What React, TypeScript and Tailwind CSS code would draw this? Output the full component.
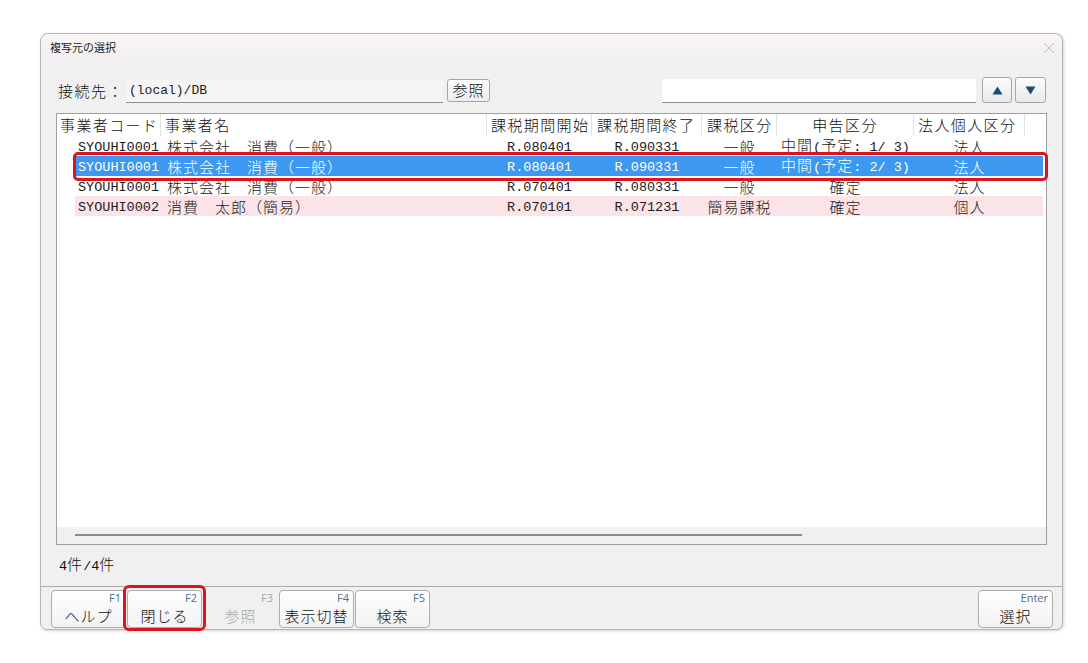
import React from "react";

type Run = { wide: boolean; t: string };

// Split a string into half-width and full-width runs so each gets its own font.
function splitRuns(s: string): Run[] {
  const runs: Run[] = [];
  for (const ch of s) {
    const wide = (ch.codePointAt(0) ?? 0) > 0x2000;
    const last = runs[runs.length - 1];
    if (last && last.wide === wide) last.t += ch;
    else runs.push({ wide, t: ch });
  }
  return runs;
}

function Txt({ s }: { s: string }) {
  return (
    <span className="whitespace-pre">
      {splitRuns(s).map((r, i) =>
        r.wide ? (
          <span key={i} className="font-['Noto_Sans_CJK_JP',sans-serif] font-light text-[15px] tracking-[1px]">
            {r.t}
          </span>
        ) : (
          <span key={i} className="font-['Liberation_Mono',monospace] text-[13.5px]">
            {r.t}
          </span>
        )
      )}
    </span>
  );
}

type Row = {
  code: string;
  name: string;
  start: string;
  end: string;
  kubun: string;
  shinkoku: string;
  houjin: string;
  tone: "plain" | "selected" | "pink";
};

const rows: Row[] = [
  {
    code: "SYOUHI0001",
    name: "株式会社　消費（一般）",
    start: "R.080401",
    end: "R.090331",
    kubun: "一般",
    shinkoku: "中間(予定: 1/ 3)",
    houjin: "法人",
    tone: "plain",
  },
  {
    code: "SYOUHI0001",
    name: "株式会社　消費（一般）",
    start: "R.080401",
    end: "R.090331",
    kubun: "一般",
    shinkoku: "中間(予定: 2/ 3)",
    houjin: "法人",
    tone: "selected",
  },
  {
    code: "SYOUHI0001",
    name: "株式会社　消費（一般）",
    start: "R.070401",
    end: "R.080331",
    kubun: "一般",
    shinkoku: "確定",
    houjin: "法人",
    tone: "plain",
  },
  {
    code: "SYOUHI0002",
    name: "消費　太郎（簡易）",
    start: "R.070101",
    end: "R.071231",
    kubun: "簡易課税",
    shinkoku: "確定",
    houjin: "個人",
    tone: "pink",
  },
];

function HeaderCell({ w, children, center }: { w: string; children: React.ReactNode; center?: boolean }) {
  return (
    <div
      className={
        w +
        " h-full flex items-center border-r border-[#e2e2e2] text-[15px] font-light tracking-[1.4px] whitespace-nowrap " +
        (center ? "justify-center" : "")
      }
    >
      {children}
    </div>
  );
}

function DataRow({ r }: { r: Row }) {
  const tone =
    r.tone === "selected"
      ? "bg-[#3c98f0] text-white"
      : r.tone === "pink"
      ? "bg-[#fae4e8] text-[#1a1a1a]"
      : "text-[#1a1a1a]";
  return (
    <div className={"relative ml-[18px] w-[968px] h-[20px] flex items-center leading-[20px] " + tone}>
      <div className="w-[86px] pl-[3px]">
        <Txt s={r.code} />
      </div>
      <div className="w-[326px] pl-[6px]">
        <Txt s={r.name} />
      </div>
      <div className="w-[105px] text-center">
        <Txt s={r.start} />
      </div>
      <div className="w-[110px] text-center">
        <Txt s={r.end} />
      </div>
      <div className="w-[75px] text-center">
        <Txt s={r.kubun} />
      </div>
      <div className="w-[137px] text-center">
        <Txt s={r.shinkoku} />
      </div>
      <div className="w-[111px] text-center">
        <Txt s={r.houjin} />
      </div>
      <div className="flex-1" />
      {r.tone === "selected" && (
        <div className="absolute z-10 -left-[2px] -top-[4px] w-[975px] h-[29px] border-[3px] border-[#dc1420] rounded-[5px]" />
      )}
    </div>
  );
}

function FKey({
  k,
  label,
  disabled,
  marked,
}: {
  k: string;
  label: string;
  disabled?: boolean;
  marked?: boolean;
}) {
  return (
    <div className="relative">
      <div
        className={
          "w-[75px] h-[38px] flex flex-col rounded-[4px] border " +
          (disabled
            ? "border-transparent"
            : "border-[#adadad] bg-linear-to-b from-white to-[#f2f2f2]")
        }
      >
        <div
          className={
            "h-[13px] leading-[13px] text-right pr-[4px] text-[11px] font-['Open_Sans',sans-serif] " +
            (disabled ? "text-[#9aa6b2]" : "text-[#4e6e8e]")
          }
        >
          {k}
        </div>
        <div
          className={
            "mt-[1px] h-[22px] leading-[22px] text-center text-[15px] font-light tracking-[1px] " +
            (disabled ? "text-[#a8a8a8]" : "text-[#111]")
          }
        >
          {label}
        </div>
      </div>
      {marked && (
        <div className="absolute z-10 -left-[4px] -top-[5px] w-[83px] h-[46px] border-[3px] border-[#dc1420] rounded-[6px]" />
      )}
    </div>
  );
}

function TriButton({ up, className }: { up?: boolean; className: string }) {
  return (
    <div
      className={
        className +
        " -mt-[2px] h-[26px] flex items-center justify-center rounded-[3px] border border-[#a8a8a8] bg-linear-to-b from-[#fbfbfb] to-[#e9e9e9]"
      }
    >
      <svg width="11" height="9" viewBox="0 0 11 9">
        {up ? (
          <polygon points="5.5,0.5 10.5,8.5 0.5,8.5" fill="#1f4a78" />
        ) : (
          <polygon points="0.5,0.5 10.5,0.5 5.5,8.5" fill="#1f4a78" />
        )}
      </svg>
    </div>
  );
}

export default function App() {
  return (
    <div className="w-[1088px] h-[663px] bg-white pt-[33px] pl-[40px] font-['Noto_Sans_CJK_JP',sans-serif] text-[#111]">
      <div className="w-[1023px] h-[597px] flex flex-col rounded-t-[8px] rounded-b-[7px] border border-[#b5b5b5] bg-[#f0f0f0] shadow-[1px_1px_3px_rgba(0,0,0,0.18)]">
        {/* title bar */}
        <div className="h-[27px] shrink-0 flex items-center justify-between pl-[9px] pr-[7px] rounded-t-[8px] bg-linear-to-b from-[#faf6f6] to-[#f1eeef]">
          <span className="text-[11px] leading-none text-[#222]">複写元の選択</span>
          <svg width="12" height="12" viewBox="0 0 12 12">
            <path d="M1 1L11 11M11 1L1 11" stroke="#bdbdbd" strokeWidth="1" />
          </svg>
        </div>

        <div className="flex flex-col px-[15px]">
          {/* connection target row */}
          <div className="mt-[18px] h-[24px] flex items-start">
            <div className="w-[70px] h-full flex items-center pl-[2px] text-[15px] font-light tracking-[1.5px]">接続先：</div>
            <div className="w-[317px] h-full flex items-center pl-[3px] bg-[#f4f4f4] border-b border-[#8f8f8f]">
              <span className="font-['Liberation_Mono',monospace] text-[13px] text-[#222]">(local)/DB</span>
            </div>
            <div className="ml-[4px] w-[43px] h-[23px] flex items-center justify-center rounded-[3px] border border-[#a5a5a5] bg-linear-to-b from-white to-[#ededed] text-[15px] font-light tracking-[1px]">
              参照
            </div>
            <div className="ml-auto w-[314px] h-full bg-white border-b border-[#8f8f8f]" />
            <TriButton up className="ml-[6px] w-[30px]" />
            <TriButton className="ml-[3px] mr-[1px] w-[31px]" />
          </div>

          {/* list */}
          <div className="mt-[10px] h-[432px] flex flex-col border border-[#a0a0a0] bg-white">
            <div className="h-[22px] shrink-0 flex">
              <HeaderCell w="w-[104px] pl-[3px]">事業者コード</HeaderCell>
              <HeaderCell w="w-[326px] pl-[4px]">事業者名</HeaderCell>
              <HeaderCell w="w-[105px] pl-[4px]">課税期間開始</HeaderCell>
              <HeaderCell w="w-[110px] pl-[5px]">課税期間終了</HeaderCell>
              <HeaderCell w="w-[75px] pl-[5px]">課税区分</HeaderCell>
              <HeaderCell w="w-[137px]" center>
                申告区分
              </HeaderCell>
              <HeaderCell w="w-[111px] pl-[4px]">法人個人区分</HeaderCell>
              <div className="flex-1" />
            </div>
            <div className="flex-1">
              {rows.map((r, i) => (
                <DataRow key={i} r={r} />
              ))}
            </div>
            <div className="h-[17px] shrink-0 pt-[7px] bg-[#f0f0f2]">
              <div className="ml-[18px] w-[727px] h-[2px] bg-[#8a8a8a]" />
            </div>
          </div>

          {/* record count */}
          <div className="h-[41px] flex items-center pl-[3px] pb-[3px]">
            <Txt s="4件/4件" />
          </div>
        </div>

        {/* function keys */}
        <div className="flex-1 flex border-t border-[#ababab] pt-[3px] pl-[10px] pr-[9px]">
          <div className="flex gap-[1px]">
            <FKey k="F1" label="ヘルプ" />
            <FKey k="F2" label="閉じる" marked />
            <FKey k="F3" label="参照" disabled />
            <FKey k="F4" label="表示切替" />
            <FKey k="F5" label="検索" />
          </div>
          <div className="ml-auto">
            <FKey k="Enter" label="選択" />
          </div>
        </div>
      </div>
    </div>
  );
}
